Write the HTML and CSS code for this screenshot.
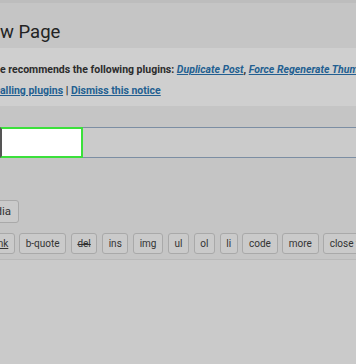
FILE: index.html
```html
<!DOCTYPE html>
<html lang="en">
<head>
  <meta charset="UTF-8">
  <meta name="viewport" content="width=device-width, initial-scale=1.0">
  <title>Add New Page</title>
  <link rel="stylesheet" href="styles.css">
</head>
<body>
  <div class="topline"></div>
  <div class="wrap">
    <h1 class="page-title">w Page</h1>

    <div class="notice">
      <p>e recommends the following plugins: <a href="#"><em>Duplicate Post</em></a>, <a href="#"><em>Force Regenerate Thumbnails</em></a></p>
      <p><a href="#">alling plugins</a> | <a href="#">Dismiss this notice</a></p>
    </div>

    <div class="title-row">
      <div class="title-input"></div>
      <div class="title-rest"></div>
    </div>

    <div class="media-row">
      <button class="btn media">Add Media</button>
    </div>

    <div class="toolbar">
      <div class="toolbar-start">
        <button class="btn link">link</button>
      </div>
      <button class="btn">b-quote</button>
      <button class="btn del">del</button>
      <button class="btn">ins</button>
      <button class="btn">img</button>
      <button class="btn">ul</button>
      <button class="btn">ol</button>
      <button class="btn">li</button>
      <button class="btn">code</button>
      <button class="btn">more</button>
      <button class="btn">close tags</button>
    </div>

    <div class="editor"></div>
  </div>
</body>
</html>
```

FILE: styles.css
```css
html, body { margin: 0; padding: 0; }
body { background: #c5c5c5; font-family: Roboto, "Noto Sans", sans-serif; color: #2c2c2c; overflow: hidden; height: 364px; }

.topline { height: 3px; background: #bdbdbd; }

.wrap { width: 420px; }

.page-title { margin: 0; padding: 18px 0 0 0; height: 27px; font-size: 18.5px; font-weight: 400; line-height: 22px; color: #232323; }

.notice { height: 58px; background: #cfcfcf; box-sizing: border-box; padding: 11px 0 0 0; }
.notice p { margin: 0; font-size: 10.5px; font-weight: 700; line-height: 21px; white-space: nowrap; }
.notice a { color: #235f91; }

.title-row { display: flex; margin-top: 21px; height: 31px; }
.title-input { width: 79px; background: #fff; border: 2px solid #3be03b; border-left-color: #555; }
.title-rest { flex: 1; background: #cbcbcb; border-top: 1px solid #7c8ea3; border-bottom: 1px solid #7c8ea3; }

.media-row { display: flex; justify-content: flex-end; width: 19px; margin-top: 42px; height: 23px; }

.btn { font-family: Roboto, "Noto Sans", sans-serif; font-size: 10px; color: #333; background: #cacaca; border: 1px solid #a9a9a9; border-radius: 3px; padding: 0 5.7px; height: 21px; line-height: 19px; box-sizing: border-box; flex: none; }
.media { font-size: 11.5px; height: 23px; line-height: 21px; padding: 0 7px; }

.toolbar { display: flex; gap: 4.5px; margin-top: 10px; padding-bottom: 5px; border-bottom: 1px solid #b9b9b9; }
.toolbar-start { display: flex; justify-content: flex-end; width: 15px; margin-right: -0.5px; flex: none; }
.toolbar .link { text-decoration: underline; }
.toolbar .del { text-decoration: line-through; }

.editor { height: 110px; background: #cacaca; }
```
